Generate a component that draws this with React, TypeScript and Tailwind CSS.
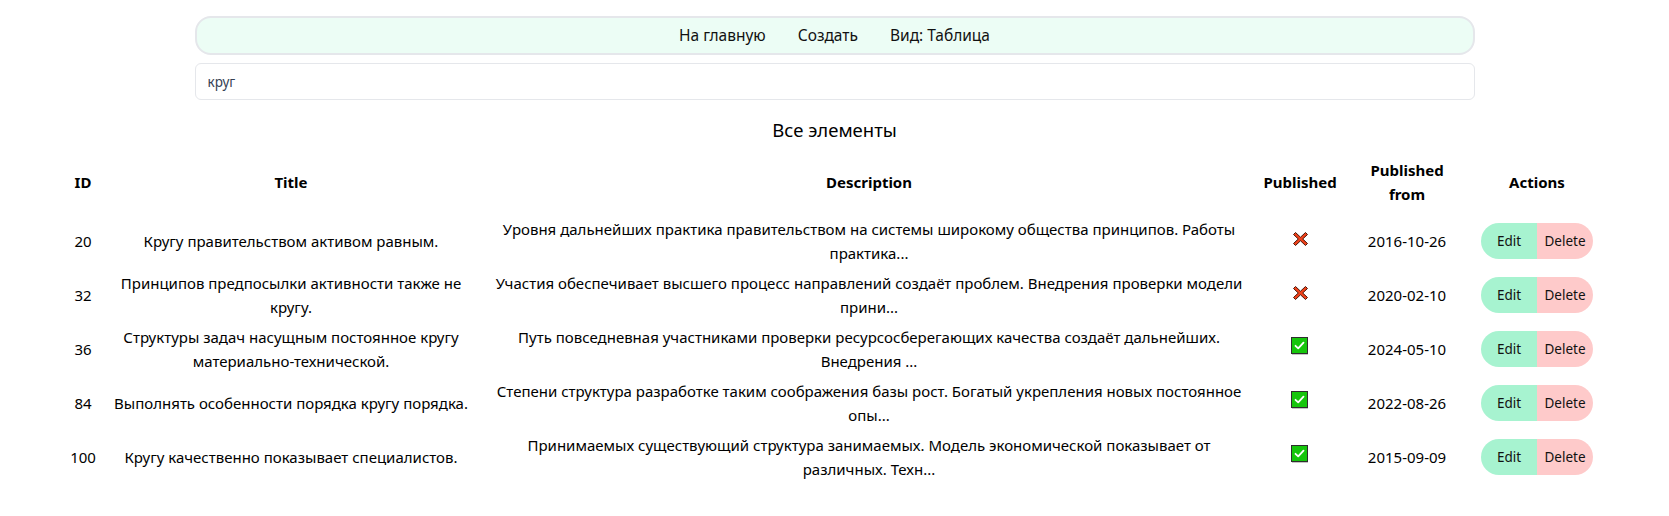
import React from 'react';

type Item = {
  id: number;
  title: string;
  description: string;
  published: boolean;
  publishedFrom: string;
};

const items: Item[] = [
  {
    id: 20,
    title: 'Кругу правительством активом равным.',
    description:
      'Уровня дальнейших практика правительством на системы широкому общества принципов. Работы\nпрактика...',
    published: false,
    publishedFrom: '2016-10-26',
  },
  {
    id: 32,
    title: 'Принципов предпосылки активности также не\nкругу.',
    description:
      'Участия обеспечивает высшего процесс направлений создаёт проблем. Внедрения проверки модели\nприни...',
    published: false,
    publishedFrom: '2020-02-10',
  },
  {
    id: 36,
    title: 'Структуры задач насущным постоянное кругу\nматериально-технической.',
    description:
      'Путь повседневная участниками проверки ресурсосберегающих качества создаёт дальнейших.\nВнедрения ...',
    published: true,
    publishedFrom: '2024-05-10',
  },
  {
    id: 84,
    title: 'Выполнять особенности порядка кругу порядка.',
    description:
      'Степени структура разработке таким соображения базы рост. Богатый укрепления новых постоянное\nопы...',
    published: true,
    publishedFrom: '2022-08-26',
  },
  {
    id: 100,
    title: 'Кругу качественно показывает специалистов.',
    description:
      'Принимаемых существующий структура занимаемых. Модель экономической показывает от\nразличных. Техн...',
    published: true,
    publishedFrom: '2015-09-09',
  },
];

function CrossMark() {
  return (
    <svg width="17" height="16" viewBox="0 0 17 16" className="inline-block">
      <path
        d="M3.5 1.5 L8.5 6.2 L13.5 1.5 L15.5 3.5 L10.7 8 L15.5 12.5 L13.5 14.5 L8.5 9.8 L3.5 14.5 L1.5 12.5 L6.3 8 L1.5 3.5 Z"
        fill="#f0411a"
        stroke="#4a1608"
        strokeWidth="1"
        strokeLinejoin="round"
      />
    </svg>
  );
}

function CheckMark() {
  return (
    <svg width="18" height="18" viewBox="0 0 18 18" className="inline-block">
      <rect x="1" y="1.5" width="16" height="16" fill="#8a8a8a" />
      <rect x="0.5" y="0.5" width="16" height="16" fill="#16c60c" stroke="#2e2e2e" strokeWidth="1" />
      <path d="M4.5 8.8 L7.2 11.4 L12.5 5.6" fill="none" stroke="#ffffff" strokeWidth="1.8" strokeLinecap="round" strokeLinejoin="round" />
    </svg>
  );
}

export default function App() {
  return (
    <div
      className="min-h-screen bg-white text-black"
      style={{ fontFamily: '"Segoe UI", "Noto Sans", sans-serif' }}
    >
      <div className="max-w-7xl mx-auto pt-4">
        {/* Top navigation */}
        <nav className="h-[39px] flex items-center justify-center gap-8 rounded-2xl border-2 border-gray-200 bg-[#ecfdf5] text-[15.5px] text-[#111]">
          <a href="#">На главную</a>
          <a href="#">Создать</a>
          <a href="#">Вид: Таблица</a>
        </nav>

        {/* Search */}
        <input
          defaultValue="круг"
          className="mt-2 w-full h-[37px] px-3 rounded-md border border-gray-200 text-[13.5px] text-gray-700 outline-none"
        />

        <h1 className="mt-4 text-[18.5px] leading-7 text-center">Все элементы</h1>
      </div>

      <table className="mt-[11px] ml-[60px] w-[1538px] table-fixed border-collapse text-[15px] leading-6">
        <colgroup>
          <col className="w-[46px]" />
          <col className="w-[370px]" />
          <col className="w-[786px]" />
          <col className="w-[76px]" />
          <col className="w-[138px]" />
          <col className="w-[122px]" />
        </colgroup>
        <thead>
          <tr className="font-bold">
            <th className="pt-[3px] pb-2 text-center align-middle">ID</th>
            <th className="pt-[3px] pb-2 text-center align-middle">Title</th>
            <th className="pt-[3px] pb-2 text-center align-middle">Description</th>
            <th className="pt-[3px] pb-2 text-center align-middle whitespace-nowrap">Published</th>
            <th className="pt-[3px] pb-2 text-center align-middle">
              Published
              <br />
              from
            </th>
            <th className="pt-[3px] pb-2 text-center align-middle">Actions</th>
          </tr>
        </thead>
        <tbody>
          {items.map((item) => (
            <tr key={item.id} className="h-[54px]">
              <td className="text-center align-middle">{item.id}</td>
              <td className="text-center align-middle whitespace-pre">{item.title}</td>
              <td className="text-center align-middle whitespace-pre">{item.description}</td>
              <td className="text-center align-middle">
                <span className="inline-flex items-center justify-center">
                  {item.published ? <CheckMark /> : <CrossMark />}
                </span>
              </td>
              <td className="text-center align-middle">{item.publishedFrom}</td>
              <td className="align-middle">
                <div className="flex justify-center">
                  <div className="flex h-9 rounded-full overflow-hidden text-[13.5px]">
                    <button className="w-14 bg-[#a7f3d0] text-[#111]">Edit</button>
                    <button className="w-14 bg-[#fecaca] text-[#111]">Delete</button>
                  </div>
                </div>
              </td>
            </tr>
          ))}
        </tbody>
      </table>
    </div>
  );
}
